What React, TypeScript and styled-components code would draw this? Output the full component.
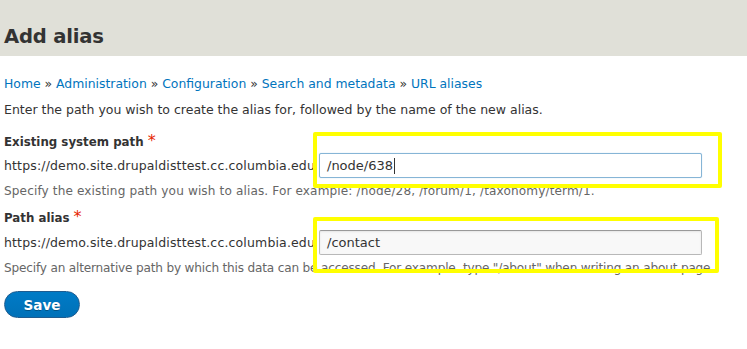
import styled, { createGlobalStyle } from "styled-components";

const GlobalStyle = createGlobalStyle`
  html, body {
    margin: 0;
    padding: 0;
    background: #ffffff;
  }
  body {
    font-family: "DejaVu Sans", Verdana, sans-serif;
    color: #333333;
  }
`;

export default function App() {
  return (
    <>
      <GlobalStyle />
      <Header>
        <Title>Add alias</Title>
      </Header>
      <Content>
        <Breadcrumb>
          <Crumb>Home</Crumb> » <Crumb>Administration</Crumb> » <Crumb>Configuration</Crumb> »{" "}
          <Crumb>Search and metadata</Crumb> » <Crumb>URL aliases</Crumb>
        </Breadcrumb>
        <Intro>Enter the path you wish to create the alias for, followed by the name of the new alias.</Intro>
        <Form>
          <Field>
            <Label>
              Existing system path <Required>*</Required>
            </Label>
            <Row>
              <Prefix>https://demo.site.drupaldisttest.cc.columbia.edu</Prefix>
              <Input $focused>
                /node/638<Caret />
              </Input>
              <Highlight $top={-21} $width={409} $height={56} />
            </Row>
            <Description $spacing={0.12}>
              Specify the existing path you wish to alias. For example: /node/28, /forum/1, /taxonomy/term/1.
            </Description>
          </Field>
          <Field>
            <Label>
              Path alias <Required>*</Required>
            </Label>
            <Row $gap={2}>
              <Prefix>https://demo.site.drupaldisttest.cc.columbia.edu</Prefix>
              <Input>/contact</Input>
              <Highlight $top={-13} $width={406} $height={56} />
            </Row>
            <Description $spacing={-0.18}>
              Specify an alternative path by which this data can be accessed. For example, type "/about" when writing an
              about page.
            </Description>
          </Field>
          <SaveButton>Save</SaveButton>
        </Form>
      </Content>
    </>
  );
}

const Header = styled.div`
  display: flex;
  align-items: flex-end;
  height: 56px;
  padding: 0 4px 8px;
  box-sizing: border-box;
  background-color: #e0e0d8;
`;

const Title = styled.h1`
  margin: 0;
  font-family: "DejaVu Sans", Verdana, sans-serif;
  font-size: 19.6px;
  font-weight: 700;
  color: #333333;
  letter-spacing: -0.2px;
`;

const Content = styled.div`
  padding: 18px 4px 0;
`;

const Breadcrumb = styled.div`
  font-size: 12.4px;
  line-height: 20px;
  color: #333333;
  white-space: nowrap;
`;

const Crumb = styled.a`
  color: #0074bd;
  text-decoration: none;
`;

const Intro = styled.p`
  margin: 6px 0 0;
  font-size: 12.5px;
  line-height: 20px;
  white-space: nowrap;
`;

const Form = styled.div`
  display: flex;
  flex-direction: column;
  margin-top: 12px;
`;

const Field = styled.div`
  display: flex;
  flex-direction: column;
  margin-bottom: 9px;
`;

const Label = styled.div`
  font-size: 11.8px;
  font-weight: 700;
  line-height: 20px;
`;

const Required = styled.span`
  color: #e62600;
  font-size: 16px;
  font-weight: 400;
  line-height: 12px;
`;

const Row = styled.div<{ $gap?: number }>`
  position: relative;
  display: flex;
  align-items: center;
  gap: 3px;
  margin-top: ${(p) => p.$gap ?? 1}px;
`;

const Prefix = styled.span`
  width: 312px;
  font-size: 12.5px;
  letter-spacing: 0.15px;
  white-space: nowrap;
`;

const Input = styled.div<{ $focused?: boolean }>`
  display: flex;
  align-items: center;
  box-sizing: border-box;
  width: 383px;
  height: 25px;
  padding: 0 7px;
  border: 1px solid ${(p) => (p.$focused ? "#86b5d6" : "#b8b8b8")};
  border-top-color: ${(p) => (p.$focused ? "#86b5d6" : "#999999")};
  border-radius: 2px;
  background-color: ${(p) => (p.$focused ? "#ffffff" : "#f8f8f8")};
  box-shadow: ${(p) => (p.$focused ? "0 0 1px #9ecbe8" : "inset 0 1px 2px rgba(0, 0, 0, 0.08)")};
  font-size: 13px;
  color: #333333;
`;

const Caret = styled.span`
  display: inline-block;
  width: 1px;
  height: 16px;
  margin-left: 1px;
  background-color: #333333;
`;

const Description = styled.div<{ $spacing: number }>`
  margin-top: 5px;
  font-size: 12.1px;
  line-height: 16px;
  letter-spacing: ${(p) => p.$spacing}px;
  color: #666666;
  white-space: nowrap;
`;

const SaveButton = styled.button`
  align-self: flex-start;
  width: 76px;
  height: 27px;
  margin-top: 6px;
  padding: 0;
  border: 1px solid #1e5c90;
  border-radius: 20px;
  background: linear-gradient(to bottom, #007bc6, #0071b8);
  color: #ffffff;
  font-family: "DejaVu Sans", Verdana, sans-serif;
  font-size: 13.5px;
  font-weight: 700;
  text-shadow: 0 1px 0 rgba(0, 0, 0, 0.3);
`;

const Highlight = styled.div<{ $top: number; $width: number; $height: number }>`
  position: absolute;
  top: ${(p) => p.$top}px;
  left: 309px;
  width: ${(p) => p.$width}px;
  height: ${(p) => p.$height}px;
  box-sizing: border-box;
  border: 4px solid #ffff00;
  border-radius: 2px;
  pointer-events: none;
`;
